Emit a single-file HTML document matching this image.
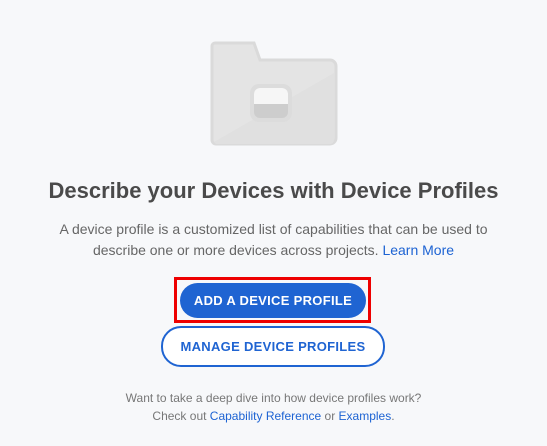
<!DOCTYPE html>
<html><head><style>
body{margin:0;width:547px;height:446px;background:#f7f8fa;font-family:"Liberation Sans",sans-serif;position:relative;overflow:hidden}
.t{position:absolute;left:0;width:547px;text-align:center}
a{color:#1d63d3;text-decoration:none}
</style></head><body>
<svg style="position:absolute;left:0;top:0" width="547" height="160">
<path d="M214 43h40l6 17h70a6 6 0 0 1 6 6v10H212V46z" fill="#cfcfcf"/>
<path d="M212 46a3 3 0 0 1 3-3h39l6 17h70a6 6 0 0 1 6 6v72a6 6 0 0 1-6 6H216a4 4 0 0 1-4-4z" fill="#e4e4e4" stroke="#dadada" stroke-width="3"/>
<path d="M214 142L334 73V140a4 4 0 0 1-4 4H216z" fill="#e0e0e0"/>
<path d="M214 142L334 73" stroke="#e6e6e6" stroke-width="0"/>
<rect x="250" y="84" width="42" height="38" rx="9" fill="#dcdcdc"/>
<rect x="254" y="88" width="34" height="30" rx="6" fill="#cdcdcd"/>
<path d="M254 104v-10a6 6 0 0 1 6-6h22a6 6 0 0 1 6 6v10z" fill="#f6f6f6"/>
</svg>
<div class="t" style="top:178px;font-size:22px;font-weight:bold;color:#4a4a4a">Describe your Devices with Device Profiles</div>
<div class="t" style="top:219px;font-size:14px;line-height:21px;color:#666">A device profile is a customized list of capabilities that can be used to<br>describe one or more devices across projects. <a>Learn More</a></div>
<div style="position:absolute;left:174px;top:277px;width:191px;height:40px;border:3px solid #ee0000"></div>
<div style="position:absolute;left:180px;top:283px;width:186px;height:35px;border-radius:18px;background:#1f64d2;color:#fff;font-size:13px;font-weight:bold;text-align:center;line-height:35px;letter-spacing:.3px">ADD A DEVICE PROFILE</div>
<div style="position:absolute;left:161px;top:326px;width:220px;height:37px;border:2px solid #1f64d2;border-radius:20px;background:#fff;color:#1f64d2;font-size:13px;font-weight:bold;text-align:center;line-height:37px;letter-spacing:.3px">MANAGE DEVICE PROFILES</div>
<div class="t" style="top:389px;font-size:12px;line-height:18px;color:#777">Want to take a deep dive into how device profiles work?<br>Check out <a>Capability Reference</a> or <a>Examples</a>.</div>
</body></html>
